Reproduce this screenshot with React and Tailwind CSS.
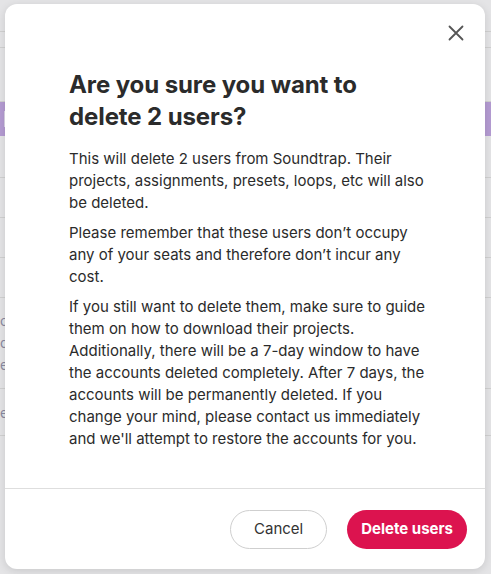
import React from 'react';

const BgRow = ({ children, h }) => (
  <div className={`${h} border-b border-[#d0d0d0] flex items-center text-[14px] text-[#8a8aa0]`}>
    {children}
  </div>
);

const ConfirmDeleteModal = () => {
  return (
    <div className="absolute left-[5px] top-[4px] w-[480px] h-[565px] bg-white rounded-[12px] shadow-[0_2px_8px_rgba(0,0,0,0.12)] flex flex-col">
      <div className="flex justify-end pt-[17px] pr-[17px]">
        <button className="w-[24px] h-[24px] flex items-center justify-center text-[#555]">
          <svg width="16" height="16" viewBox="0 0 16 16" fill="none" stroke="currentColor" strokeWidth="1.8" strokeLinecap="round">
            <path d="M1.5 1.5L14.5 14.5M14.5 1.5L1.5 14.5" />
          </svg>
        </button>
      </div>
      <div className="flex-1 pl-[64px] pr-[58px] pt-[24px]">
        <h2 className="text-[24px] leading-[32px] font-bold text-[#2b2b2b] tracking-[-0.1px]">
          Are you sure you want to delete 2 users?
        </h2>
        <div className="mt-[15px] flex flex-col gap-[8px] text-[15px] leading-[22px] text-[#2b2b2b]">
          <p>This will delete 2 users from Soundtrap. Their projects, assignments, presets, loops, etc will also be deleted.</p>
          <p>Please remember that these users don’t occupy any of your seats and therefore don’t incur any cost.</p>
          <p>
            If you still want to delete them, make sure to guide them on how to download their projects. Additionally,
            there will be a 7-day window to have the accounts deleted completely. After 7 days, the accounts will be
            permanently deleted. If you change your mind, please contact us immediately and we'll attempt to restore the
            accounts for you.
          </p>
        </div>
      </div>
      <div className="border-t border-[#dedede] h-[81px] flex items-center justify-end gap-[20px] pr-[18px]">
        <button className="h-[39px] px-[23px] rounded-full border border-[#cfcfcf] bg-white text-[15px] text-[#333]">
          Cancel
        </button>
        <button className="h-[39px] px-[14px] rounded-full bg-[#dc134f] text-[15px] font-bold text-white">
          Delete users
        </button>
      </div>
    </div>
  );
};

const App = () => {
  return (
    <div className="relative w-[491px] h-[574px] overflow-hidden bg-[#e4e4e6]" style={{ fontFamily: 'Inter, "Liberation Sans", sans-serif' }}>
      <div className="flex flex-col">
        <BgRow h="h-[32px]" />
        <BgRow h="h-[16px]" />
        <BgRow h="h-[54px]" />
        <div className="h-[34px] bg-[#b49bd2] flex items-center px-1">
          <div className="w-[6px] h-[16px] bg-[#dcd6e6]" />
        </div>
        <BgRow h="h-[42px]" />
        <BgRow h="h-[40px]" />
        <BgRow h="h-[40px]" />
        <BgRow h="h-[40px]" />
        <div className="h-[90px] flex flex-col justify-center text-[14px] leading-[22px] text-[#8a8aa0]">
          <span>ol</span>
          <span>de</span>
          <span>er</span>
        </div>
        <div className="h-[48px] border-t border-b border-[#d0d0d0] flex items-center text-[14px] text-[#8a8aa0]">er</div>
      </div>
      <ConfirmDeleteModal />
    </div>
  );
};

export default App;
